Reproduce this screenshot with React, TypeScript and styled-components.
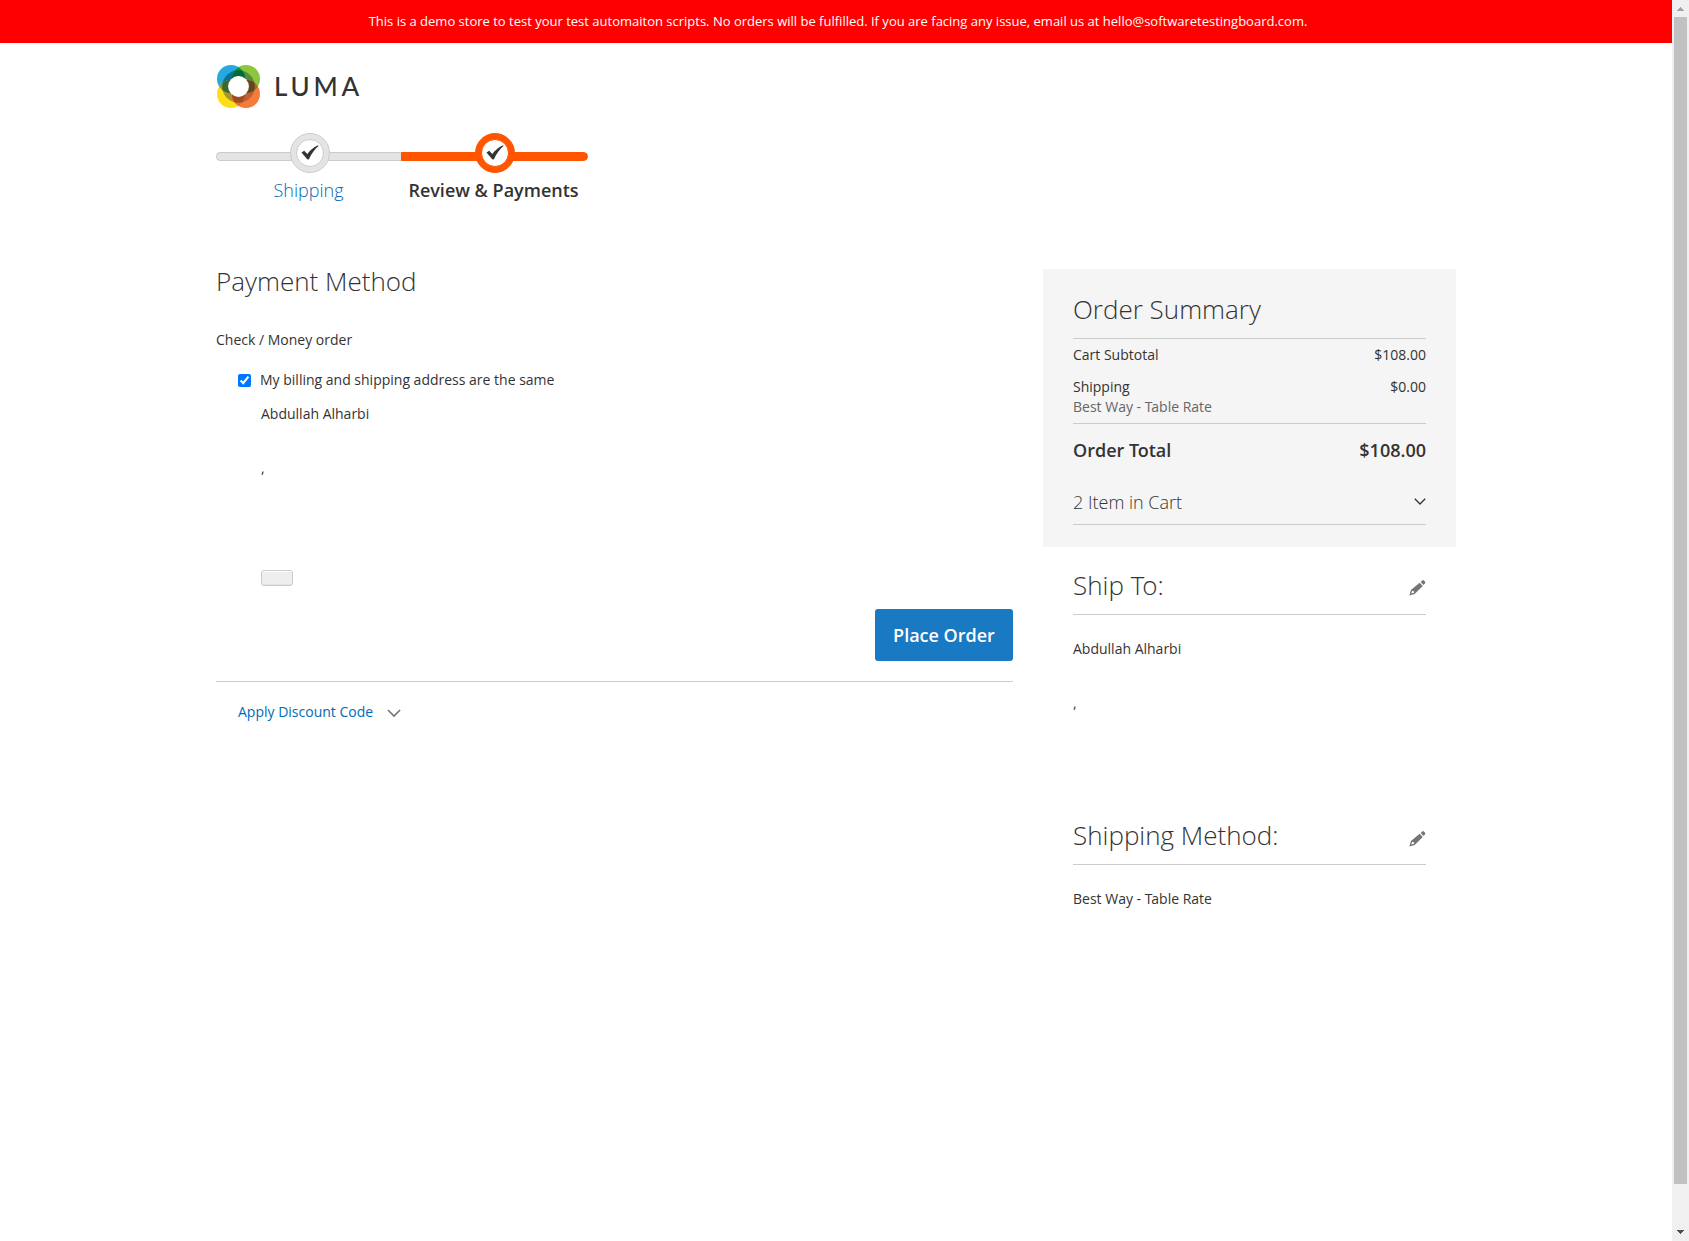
import React from "react";
import styled, { createGlobalStyle } from "styled-components";

const GlobalStyle = createGlobalStyle`
  *, *::before, *::after { box-sizing: border-box; }
  html, body { margin: 0; padding: 0; background: #fff; }
  body {
    overflow: hidden;
    color: #333;
    font: 400 14px/20px "Open Sans", "Liberation Sans", sans-serif;
  }
  button { font-family: inherit; }
  h1, h2, p { margin: 0; }
`;

const Viewport = styled.div`
  display: flex;
  height: 1241px;
`;

const Page = styled.div`
  flex: 1;
  min-width: 0;
`;

const Banner = styled.p`
  height: 43px;
  background: #f00;
  color: #fff;
  font-size: 13px;
  font-weight: 500;
  line-height: 43px;
  text-align: center;
  padding-left: 4px;
  white-space: nowrap;
`;

const Container = styled.div`
  max-width: 1280px;
  margin: 0 auto;
  padding: 0 20px;
`;

const Header = styled.header`
  display: flex;
  align-items: center;
  height: 90px;
  padding: 0 0 3px 1px;
`;

const Wordmark = styled.span`
  margin: -1px 0 0 14px;
  font: 500 26px/30px Lato, sans-serif;
  letter-spacing: 3.8px;
  color: #333;
`;

const Steps = styled.ol`
  display: grid;
  grid-template-columns: 185px 187px;
  height: 134px;
  margin: 0;
  padding: 0;
  list-style: none;
`;

const Step = styled.li<{ $active?: boolean }>`
  display: grid;
  grid-template: 40px 34px / 185px;
  justify-items: center;
  font-size: 18px;
  line-height: 34px;
  font-weight: ${(p) => (p.$active ? 600 : 300)};
  color: ${(p) => (p.$active ? "#333" : "#006bb4")};
`;

const Track = styled.span<{ $active?: boolean }>`
  grid-area: 1 / 1;
  justify-self: start;
  width: ${(p) => (p.$active ? 187 : 185)}px;
  height: 9px;
  margin-top: 19px;
  background: ${(p) => (p.$active ? "#ff5501" : "#e4e4e4")};
  border: 1px solid ${(p) => (p.$active ? "#ff5501" : "#ccc")};
  ${(p) =>
    p.$active
      ? "border-radius: 0 6px 6px 0;"
      : "border-radius: 6px 0 0 6px; border-right: 0;"}
`;

const Knob = styled.span<{ $active?: boolean }>`
  grid-area: 1 / 1;
  display: flex;
  align-items: center;
  justify-content: center;
  width: 40px;
  height: 40px;
  margin-left: 3px;
  z-index: 1;
  border-radius: 50%;
  background: ${(p) => (p.$active ? "#ff5501" : "#e4e4e4")};
  border: 1px solid ${(p) => (p.$active ? "#ff5501" : "#ccc")};
`;

const KnobCore = styled.span<{ $active?: boolean }>`
  display: flex;
  align-items: center;
  justify-content: center;
  width: 28px;
  height: 28px;
  padding: 0 1px 2px 0;
  border-radius: 50%;
  background: #fff;
  border: 1px solid ${(p) => (p.$active ? "#ff5501" : "#ccc")};
`;

const Columns = styled.div`
  display: grid;
  grid-template-columns: 797px 413px;
  justify-content: space-between;
  align-items: start;
`;

const Title = styled.h1`
  font-size: 26px;
  font-weight: 300;
  line-height: 28px;
`;

const MethodName = styled.p`
  margin-top: 35px;
`;

const BillingChoice = styled.label`
  display: flex;
  align-items: center;
  margin: 20px 0 0 22px;
`;

const Checkbox = styled.input`
  width: 13px;
  height: 13px;
  margin: 1px 9px 0 0;
  accent-color: #0075ff;
`;

const Address = styled.address<{ $height: number }>`
  height: ${(p) => p.$height}px;
  font-style: normal;
  line-height: 27px;
  white-space: pre-line;
`;

const BillingAddress = styled.div`
  margin: 10px 0 0 45px;
`;

const EmptyButton = styled.button`
  display: block;
  width: 32px;
  height: 16px;
  padding: 0;
  background: #eee;
  border: 1px solid #ccc;
  border-radius: 3px;
  box-shadow: inset 0 1px 0 #fff, inset 0 -1px 0 rgba(204, 204, 204, 0.3);
`;

const Actions = styled.div`
  display: flex;
  justify-content: flex-end;
  margin-top: 23px;
  padding-bottom: 20px;
  border-bottom: 1px solid #ccc;
`;

const PlaceOrder = styled.button`
  width: 138px;
  height: 52px;
  padding: 0;
  border: 0;
  border-radius: 3px;
  background: #1979c3;
  color: #fff;
  font-size: 18px;
  font-weight: 600;
  line-height: 22px;
`;

const Discount = styled.div`
  display: flex;
  align-items: center;
  gap: 14px;
  padding: 20px 0 0 22px;
  color: #006bb4;
  svg { margin-top: 3px; }
`;

const Sidebar = styled.aside`
  margin-top: 2px;
`;

const Summary = styled.section`
  height: 278px;
  padding: 25px 30px 0;
  background: #f5f5f5;
`;

const BlockHeading = styled.div`
  display: flex;
  justify-content: space-between;
  padding-bottom: 14px;
  border-bottom: 1px solid #ccc;
`;

const BlockTitle = styled.h2`
  font-size: 26px;
  font-weight: 300;
  line-height: 30px;
`;

const KernedT = styled.span`
  letter-spacing: -0.08em;
`;

const Totals = styled.div`
  padding: 6px 0;
  border-bottom: 1px solid #ccc;
`;

const Line = styled.div`
  display: flex;
  justify-content: space-between;
  & + & { margin-top: 12px; }
`;

const Carrier = styled.p`
  color: #666;
`;

const GrandTotal = styled.div`
  display: flex;
  justify-content: space-between;
  margin-top: 13px;
  font-size: 18px;
  font-weight: 600;
  line-height: 26px;
`;

const CartItems = styled.div`
  display: flex;
  justify-content: space-between;
  align-items: center;
  margin-top: 26px;
  padding-bottom: 9px;
  border-bottom: 1px solid #ccc;
  font-size: 18px;
  font-weight: 300;
  line-height: 26px;
`;

const Info = styled.section`
  padding: 23px 30px 0;
`;

const InfoBody = styled.div`
  margin-top: 20px;
`;

const MethodInfo = styled.section`
  padding: 0 30px;
`;

const EditButton = styled.button`
  width: 18px;
  height: 18px;
  margin: 9px 0 0;
  padding: 0;
  border: 0;
  background: none;
`;

const EditButtonLow = styled(EditButton)`
  margin-top: 10px;
`;

const Scrollbar = styled.div`
  display: flex;
  flex-direction: column;
  align-items: center;
  width: 17px;
  background: #f0f0f0;
`;

const ScrollArrow = styled.svg`
  display: block;
  width: 17px;
  height: 17px;
`;

const Thumb = styled.div`
  width: 13px;
  height: 1167px;
  margin-bottom: 40px;
  background: #c1c1c1;
`;

const LogoMark = () => (
  <svg width="43" height="43" viewBox="0 0 43 43">
    <defs>
      <clipPath id="blue"><circle cx="14" cy="14" r="14" /></clipPath>
      <clipPath id="yellow"><circle cx="14" cy="29" r="14" /></clipPath>
      <clipPath id="green"><circle cx="29" cy="14" r="14" /></clipPath>
      <clipPath id="orange"><circle cx="29" cy="29" r="14" /></clipPath>
    </defs>
    <circle cx="14" cy="14" r="14" fill="#26a9e0" />
    <circle cx="29" cy="14" r="14" fill="#8bc63e" />
    <circle cx="14" cy="29" r="14" fill="#ffde17" />
    <circle cx="29" cy="29" r="14" fill="#f47b3c" />
    <circle cx="21.5" cy="21.5" r="16.3" fill="#0b7296" clipPath="url(#blue)" />
    <circle cx="21.5" cy="21.5" r="16.3" fill="#578b3c" clipPath="url(#green)" />
    <circle cx="21.5" cy="21.5" r="16.3" fill="#a9932b" clipPath="url(#yellow)" />
    <circle cx="21.5" cy="21.5" r="16.3" fill="#c05f34" clipPath="url(#orange)" />
    <g clipPath="url(#blue)">
      <circle cx="29" cy="14" r="14" fill="#00964b" />
      <circle cx="14" cy="29" r="14" fill="#7b9c45" />
    </g>
    <g clipPath="url(#orange)">
      <circle cx="29" cy="14" r="14" fill="#8d7434" />
      <circle cx="14" cy="29" r="14" fill="#ea6d2b" />
    </g>
    <g clipPath="url(#blue)">
      <g clipPath="url(#green)"><circle cx="21.5" cy="21.5" r="16.3" fill="#006b37" /></g>
      <g clipPath="url(#yellow)"><circle cx="21.5" cy="21.5" r="16.3" fill="#3b6733" /></g>
    </g>
    <g clipPath="url(#orange)">
      <g clipPath="url(#green)"><circle cx="21.5" cy="21.5" r="16.3" fill="#65461f" /></g>
      <g clipPath="url(#yellow)"><circle cx="21.5" cy="21.5" r="16.3" fill="#a04b24" /></g>
    </g>
    <circle cx="21.5" cy="21.5" r="10.4" fill="#fff" />
  </svg>
);

const CheckMark = () => (
  <svg width="18" height="15" viewBox="0 0 18 15">
    <path d="M.5 7.600 3.200 5.800l3.100 3.300C8.800 5.600 12 2.600 17.200.3l.3.700C13.400 4.500 10.400 8.700 7.800 14.500L6.200 14.300Z" fill="#333" />
  </svg>
);

const Pencil = () => (
  <svg width="18" height="18" viewBox="0 0 18 18">
    <path transform="translate(.6 -.5)" fillRule="evenodd" fill="#757575" d="M.8 17 2.300 11.400 11.100 4.200 14.200 7.400 6 15.400ZM3.500 12.200 2.700 15.100 5.500 14.300 5.300 12.700ZM12 3.400 13.700 1.900Q14.500 1.200 15.300 2L16.300 3.100Q17.100 4 16.300 4.900L15 6.500Z" />
  </svg>
);

const Chevron = ({ width, color }: { width: number; color: string }) => (
  <svg width={width} height={width * 0.6} viewBox="0 0 13 8">
    <path d="M.7.900 6.500 6.700 12.300.900" fill="none" stroke={color} strokeWidth="1.500" />
  </svg>
);

const PERSON_ADDRESS = "Abdullah Alharbi\n\n,";

const CarrierName = () => (
  <>Best Way - <KernedT>T</KernedT>able Rate</>
);

export default function App() {
  return (
    <>
      <GlobalStyle />
      <Viewport>
        <Page>
          <Banner>
            This is a demo store to test your test automaiton scripts. No orders will be fulfilled. If you are facing any issue, email us at hello@softwaretestingboard.com.
          </Banner>
          <Container>
            <Header>
              <LogoMark />
              <Wordmark>LUMA</Wordmark>
            </Header>
            <Steps>
              <Step>
                <Track />
                <Knob><KnobCore><CheckMark /></KnobCore></Knob>
                <span>Shipping</span>
              </Step>
              <Step $active>
                <Track $active />
                <Knob $active><KnobCore $active><CheckMark /></KnobCore></Knob>
                <span>Review &amp; Payments</span>
              </Step>
            </Steps>
            <Columns>
              <main>
                <Title>Payment Method</Title>
                <MethodName>Check / Money order</MethodName>
                <BillingChoice>
                  <Checkbox type="checkbox" defaultChecked />
                  My billing and shipping address are the same
                </BillingChoice>
                <BillingAddress>
                  <Address $height={170}>{PERSON_ADDRESS}</Address>
                  <EmptyButton type="button" />
                </BillingAddress>
                <Actions>
                  <PlaceOrder type="button">Place Order</PlaceOrder>
                </Actions>
                <Discount>
                  Apply Discount Code
                  <Chevron width={14} color="#757575" />
                </Discount>
              </main>
              <Sidebar>
                <Summary>
                  <BlockHeading><BlockTitle>Order Summary</BlockTitle></BlockHeading>
                  <Totals>
                    <Line><span>Cart Subtotal</span><span>$108.00</span></Line>
                    <Line><span>Shipping</span><span>$0.00</span></Line>
                    <Carrier><CarrierName /></Carrier>
                  </Totals>
                  <GrandTotal>
                    <span>Order <KernedT>T</KernedT>otal</span>
                    <span>$108.00</span>
                  </GrandTotal>
                  <CartItems>
                    <span>2 Item in Cart</span>
                    <Chevron width={12} color="#333" />
                  </CartItems>
                </Summary>
                <Info>
                  <BlockHeading>
                    <BlockTitle>Ship <KernedT>T</KernedT>o:</BlockTitle>
                    <EditButton type="button"><Pencil /></EditButton>
                  </BlockHeading>
                  <InfoBody><Address $height={185}>{PERSON_ADDRESS}</Address></InfoBody>
                </Info>
                <MethodInfo>
                  <BlockHeading>
                    <BlockTitle>Shipping Method:</BlockTitle>
                    <EditButtonLow type="button"><Pencil /></EditButtonLow>
                  </BlockHeading>
                  <InfoBody><Address $height={27}><CarrierName /></Address></InfoBody>
                </MethodInfo>
              </Sidebar>
            </Columns>
          </Container>
        </Page>
        <Scrollbar>
          <ScrollArrow viewBox="0 0 17 17" shapeRendering="crispEdges">
            <path d="M5 11h7v-1h-1V9h-1V8H9V7H8v1H7v1H6v1H5Z" fill="#a3a3a3" />
          </ScrollArrow>
          <Thumb />
          <ScrollArrow viewBox="0 0 17 17" shapeRendering="crispEdges">
            <path d="M5 6h7v1h-1v1h-1v1H9v1H8V9H7V8H6V7H5Z" fill="#505050" />
          </ScrollArrow>
        </Scrollbar>
      </Viewport>
    </>
  );
}
